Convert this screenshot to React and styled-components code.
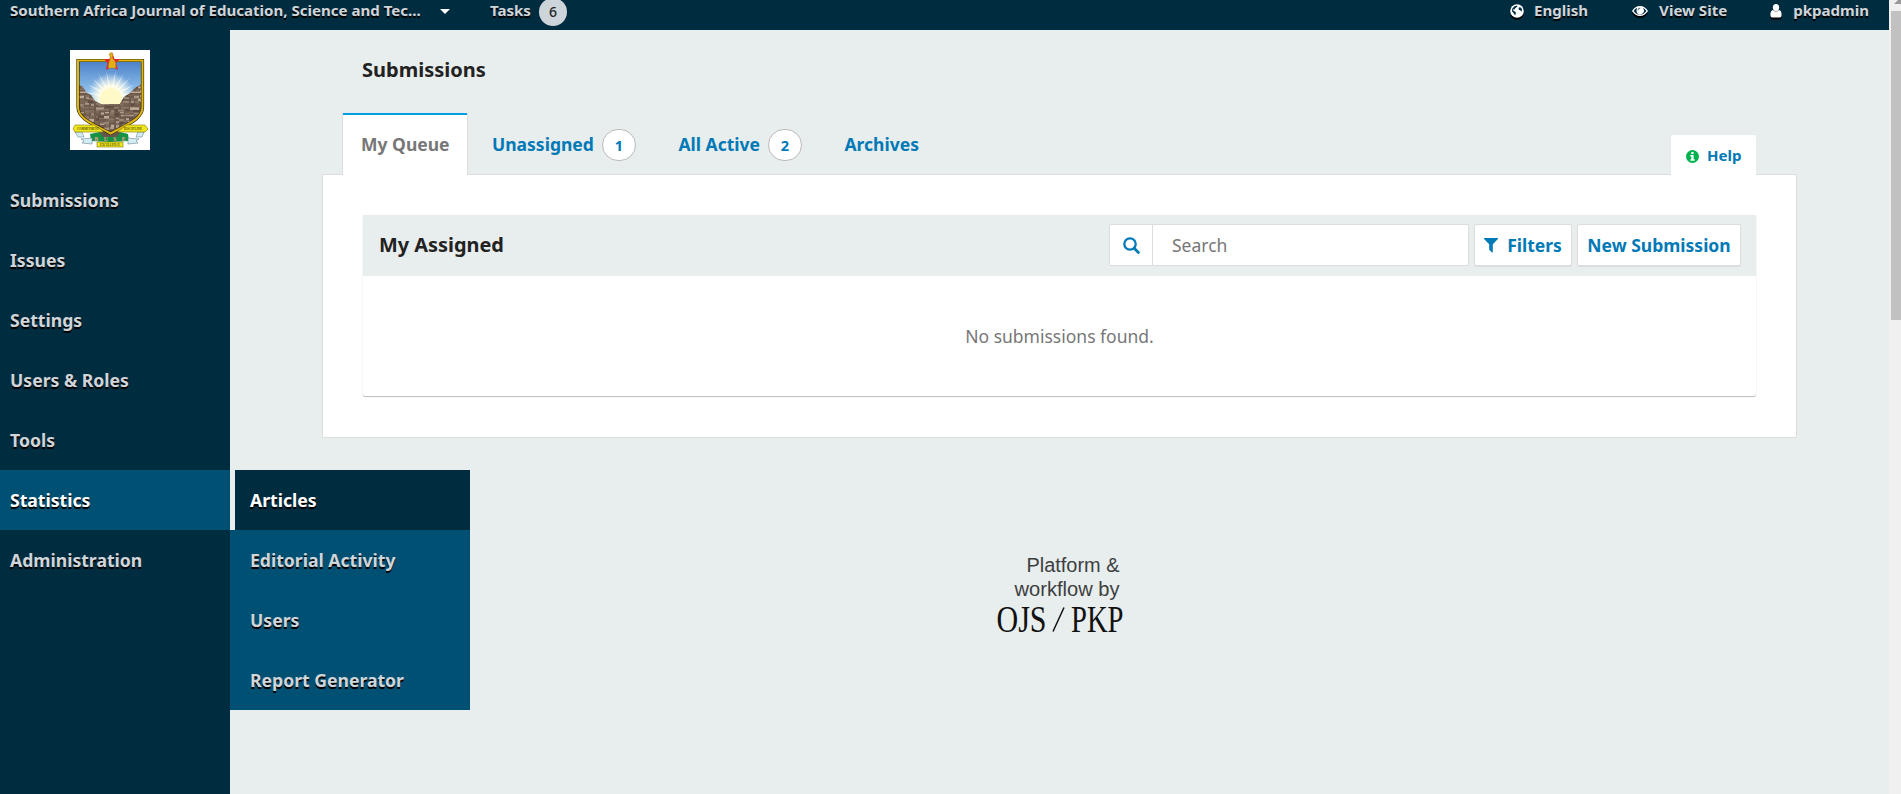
import React from "react";
import styled, { createGlobalStyle } from "styled-components";

const GlobalStyle = createGlobalStyle`
  * { box-sizing: border-box; }
  html, body, #root { height: 100%; }
  body {
    margin: 0;
    overflow: hidden;
    background: #e8eded;
    font-family: "Noto Sans", "Open Sans", sans-serif;
    font-size: 17.5px;
    color: #222;
  }
`;

const Window = styled.div`
  display: flex;
  height: 794px;
`;

const Page = styled.div`
  flex: 1;
  display: flex;
  flex-direction: column;
  min-width: 0;
`;

const TopBar = styled.header`
  display: flex;
  justify-content: space-between;
  height: 30px;
  padding: 0 20px 10px 10px;
  background: #002c40;
  color: #d0d5d9;
  font-size: 15.05px;
  font-weight: 700;
  line-height: 22px;
  text-shadow: 0 2px 0 #000;
  white-space: nowrap;
`;

const BarGroup = styled.div`
  display: flex;
  align-items: center;
`;

const JournalName = styled.div`
  width: 413px;
`;

const Caret = styled.span`
  flex: none;
  width: 10px;
  margin: 2px 40px 0 17px;
  border: 5px solid transparent;
  border-top-color: #fff;
  border-bottom: 0;
`;

const TaskCount = styled.span`
  flex: none;
  width: 28px;
  height: 28px;
  margin: 3px 0 0 8px;
  border-radius: 50%;
  background: #ced5da;
  color: #222;
  font-size: 14px;
  font-weight: 500;
  line-height: 28px;
  text-align: center;
  text-shadow: none;
`;

const UserLink = styled.a`
  display: flex;
  align-items: center;
  margin-left: ${(p) => p.$gap || 0}px;
  svg {
    flex: none;
    margin-top: 2px;
    margin-right: ${(p) => p.$iconGap}px;
    fill: #fff;
    filter: drop-shadow(0 2px 0 #000);
  }
`;

const Body = styled.div`
  flex: 1;
  display: flex;
  min-height: 0;
`;

const Sidebar = styled.aside`
  flex: none;
  width: 230px;
  background: #002c40;
`;

const LogoBox = styled.div`
  display: flex;
  height: 140px;
  padding: 20px 0 0 70px;
`;

const NavLink = styled.a`
  display: block;
  height: 60px;
  padding-left: ${(p) => p.$indent || 10}px;
  margin-left: ${(p) => p.$shift || 0}px;
  background: ${(p) => p.$bg || "transparent"};
  color: ${(p) => (p.$active ? "#fff" : "#d0d5d9")};
  font-size: 17.6px;
  font-weight: 700;
  line-height: 61px;
  text-shadow: 0 2px 0 #000;
  white-space: nowrap;
`;

const NavItem = styled.div`
  position: relative;
`;

const SubMenu = styled.div`
  position: absolute;
  left: 230px;
  top: 0;
  width: 240px;
  z-index: 2;
  background: linear-gradient(#e8eded 60px, #005073 60px);
`;

const Main = styled.main`
  flex: 1;
  padding: 0 92px;
`;

const Title = styled.h1`
  margin: 0;
  padding: 22px 0 0 40px;
  height: 83px;
  font-size: 20px;
  line-height: 36px;
`;

const TabRow = styled.div`
  display: flex;
  align-items: flex-end;
  height: 62px;
  padding: 0 41px 0 20px;
  margin-bottom: -1px;
  position: relative;
`;

const Tab = styled.button`
  position: relative;
  display: flex;
  align-items: center;
  height: 62px;
  width: ${(p) => p.$width}px;
  padding: 0 0 0 ${(p) => (p.$active ? 18 : 23)}px;
  border: solid ${(p) => (p.$active ? "#ddd" : "transparent")};
  border-width: 0 1px;
  background: ${(p) => (p.$active ? "#fff" : "transparent")};
  color: ${(p) => (p.$active ? "#777" : "#0079b7")};
  font: 700 17.5px "Noto Sans", sans-serif;
  white-space: nowrap;
  &::before {
    content: "";
    position: absolute;
    top: 0;
    left: 0;
    right: 0;
    height: 2px;
    background: ${(p) => (p.$active ? "#009de5" : "transparent")};
  }
`;

const Count = styled.span`
  width: 34px;
  height: 32px;
  margin: 1px 0 0 8px;
  border: 1px solid #bbb;
  border-radius: 16px;
  background: #fff;
  font-size: 14.5px;
  line-height: 31px;
  text-align: center;
`;

const HelpTab = styled.button`
  display: flex;
  align-items: center;
  gap: 8px;
  width: 85px;
  height: 40px;
  margin-left: auto;
  padding: 0 0 0 15px;
  border: 0;
  border-radius: 2px 2px 0 0;
  background: #fff;
  color: #0079b7;
  font: 700 15px/38px "Noto Sans", sans-serif;
  svg { flex: none; margin-top: 2px; }
`;

const Panel = styled.section`
  height: 264px;
  padding: 40px;
  border: 1px solid #ddd;
  border-radius: 2px;
  background: #fff;
`;

const Card = styled.div`
  height: 181px;
  border-radius: 2px;
  box-shadow: 0 1px 1px rgba(0, 0, 0, 0.25), 0 0 1px rgba(0, 0, 0, 0.12);
`;

const CardHeader = styled.div`
  display: flex;
  align-items: center;
  height: 61px;
  padding: 0 15px 1px 16px;
  background: #e8eded;
`;

const CardTitle = styled.h2`
  margin: 0 auto 0 0;
  padding-bottom: 2px;
  font-size: 19.9px;
`;

const SearchBox = styled.div`
  display: flex;
  width: 360px;
  height: 42px;
  margin-right: 5px;
  border: 1px solid #ddd;
  border-radius: 2px;
  background: #fff;
`;

const SearchIconBox = styled.div`
  display: flex;
  align-items: center;
  justify-content: center;
  width: 43px;
  border-right: 1px solid #ddd;
`;

const SearchInput = styled.input`
  flex: 1;
  min-width: 0;
  padding: 0 19px;
  border: 0;
  background: transparent;
  font: 17.5px "Noto Sans", sans-serif;
  &::placeholder { color: #777; opacity: 1; }
`;

const Button = styled.button`
  display: flex;
  align-items: center;
  justify-content: center;
  gap: 9px;
  width: ${(p) => p.$width}px;
  height: 42px;
  margin-left: ${(p) => p.$gap || 0}px;
  padding: 0;
  border: 1px solid #ddd;
  border-radius: 2px;
  box-shadow: 0 1px 0 #ddd;
  background: #fff;
  color: #0079b7;
  font: 700 17.5px "Noto Sans", sans-serif;
  white-space: nowrap;
`;

const EmptyNote = styled.p`
  margin: 0;
  line-height: 121px;
  text-align: center;
  color: #777;
`;

const Footer = styled.footer`
  display: flex;
  justify-content: center;
  padding-top: 112px;
`;

const ScrollTrack = styled.div`
  flex: none;
  width: 12px;
  padding-left: 2px;
  background: #f0f0f0;
`;

const ScrollArrow = styled.div`
  height: 11px;
  padding-left: 3px;
  svg { display: block; }
`;

const ScrollThumb = styled.div`
  height: 309px;
  background: #c1c1c1;
`;

const STONE = ["#9a8575", "#7b6658", "#bfaa98", "#8b7564", "#5e4c41", "#ae998a", "#846d5a"];

const stones = [];
for (let row = 0; row < 24; row += 1) {
  for (let col = 0; col < 15; col += 1) {
    const n = (row * 37 + col * 53 + row * col * 11) % 97;
    stones.push({
      x: 6 + col * 5 - (n % 4),
      y: 30 + row * 2.9 + (n % 3) * 0.6,
      w: 3 + (n % 4),
      h: 1.4 + (n % 3) * 0.6,
      c: STONE[n % STONE.length],
    });
  }
}

const SHIELD = "M8 10.5H72.5V57C72.5 69 58 74 40.5 83.5C23 74 8 69 8 57Z";

function Crest() {
  const rays = [-80, -62, -45, -28, -10, 10, 28, 45, 62, 80];
  return (
    <svg width="80" height="100" viewBox="0 0 80 100">
      <defs>
        <linearGradient id="sky" x1="0" y1="0" x2="0" y2="1">
          <stop offset="0" stopColor="#4a80c8" />
          <stop offset="0.5" stopColor="#9bcdf0" />
        </linearGradient>
        <radialGradient id="sun">
          <stop offset="0" stopColor="#fff59c" />
          <stop offset="0.45" stopColor="#fffde0" />
          <stop offset="1" stopColor="#fff" stopOpacity="0" />
        </radialGradient>
        <clipPath id="shield"><path d={SHIELD} /></clipPath>
        <clipPath id="rock">
          <path d="M6 35L12 36L17 43L21 45L25 51L31 54H50L54 47L60 43L65 38L74 33V90H6Z" />
        </clipPath>
      </defs>
      <rect width="80" height="100" fill="#fff" />
      <g clipPath="url(#shield)">
        <path d={SHIELD} fill="url(#sky)" />
        <circle cx="41" cy="47" r="24" fill="url(#sun)" />
        {rays.map((a) => (
          <path key={a} d="M39.7 47L41 20L42.3 47Z" fill="#fff" opacity="0.75" transform={`rotate(${a} 41 47)`} />
        ))}
        <circle cx="41" cy="49" r="11" fill="#fff9c8" />
        <g clipPath="url(#rock)">
          <rect x="5" y="30" width="70" height="60" fill="#6e5b4e" />
          {stones.map((s, i) => (
            <rect key={i} x={s.x} y={s.y} width={s.w} height={s.h} fill={s.c} />
          ))}
        </g>
      </g>
      <path d="M20 84L34 81L40 85L46 81L58 84L59 91L40 92L21 91Z" fill="#149344" />
      <path d="M28 80L52 80L47 87H33Z" fill="#66574d" />
      <path d={SHIELD} fill="none" stroke="#2d2912" strokeWidth="3.2" />
      <path d={SHIELD} fill="none" stroke="#e0b80d" strokeWidth="2" />
      <path d="M5 82L12 82L14 87L8 87ZM74 82L68 82L66 87L72 87ZM11 89L22 88V94L12 93L14 91ZM69 89L58 88V94L68 93L66 91Z" fill="#d4edf5" stroke="#6c8590" strokeWidth="0.6" />
      <path d="M5 75H24L33 81V82H5L3 79ZM75 75H57L48 81V82H75L78 79Z" fill="#f1e51d" stroke="#817816" strokeWidth="0.6" />
      <rect x="27" y="92" width="26" height="5" fill="#f1e51d" stroke="#817816" strokeWidth="0.6" />
      <g fontFamily="Liberation Serif, serif" fontWeight="700" textAnchor="middle">
        <text x="18" y="80.3" fontSize="4" textLength="22" lengthAdjust="spacingAndGlyphs" fill="#5d580d">COMMITMENT</text>
        <text x="63" y="80.3" fontSize="4" textLength="18" lengthAdjust="spacingAndGlyphs" fill="#5d580d">DISCIPLINE</text>
        <text x="40" y="96" fontSize="4" textLength="20" lengthAdjust="spacingAndGlyphs" fill="#5d580d">EXCELLENCE</text>
        <text x="40" y="90.5" fontSize="5.5" textLength="31" fill="#f0a090">BUSE</text>
      </g>
      <path d="M42 2L44.5 9H50L46 13L48 20L42 17L36 20L37.5 13L34 9H39.5Z" fill="#e3242b" />
      <path d="M39 4L41 2.5L43 4L42.5 8L45.5 12L46 18H38L39 12L40.5 8Z" fill="#e2ae18" stroke="#9c7512" strokeWidth="0.4" />
    </svg>
  );
}

function PlatformLogo() {
  return (
    <svg width="130" height="90" viewBox="994.5 550 130 90">
      <g fontFamily="Liberation Sans, Arial, sans-serif" fontSize="20" fill="#3c3f40">
        <text x="1026" y="572.3" textLength="93" lengthAdjust="spacingAndGlyphs">Platform &amp;</text>
        <text x="1014" y="596" textLength="105" lengthAdjust="spacingAndGlyphs">workflow by</text>
      </g>
      <g fontFamily="Liberation Serif, serif" fontSize="37" fill="#111">
        <text x="996" y="631.5" textLength="50" lengthAdjust="spacingAndGlyphs">OJS</text>
        <path d="M1052.5 631.5L1063.5 607.5" stroke="#111" strokeWidth="1.5" />
        <text x="1070.5" y="631.5" textLength="52.5" lengthAdjust="spacingAndGlyphs">PKP</text>
      </g>
    </svg>
  );
}

const GlobeIcon = () => (
  <svg width="14" height="14" viewBox="0 0 14 14">
    <circle cx="7" cy="7" r="6.8" />
    <path d="M4.5 2.2L7.5 1.4L7 3L5.2 4L4.8 5.5L3 5.2L3.2 6.5L5.5 8L6 9L5 11.6L3.9 9.6L2 7.3L2.2 4.8ZM8.6 4L10 3L12 5L11.6 7.8L10.5 6.4L8.8 5.8Z" fill="#002c40" />
  </svg>
);

const EyeIcon = () => (
  <svg width="16" height="12" viewBox="0 0 16 12">
    <path d="M0 6Q3.2 1 8 1T16 6Q12.8 11 8 11T0 6Z" />
    <path d="M1.6 6Q3 3.8 5.2 2.8Q3.6 6.2 5.5 8.4T10.5 8.4T10.8 2.8Q13 3.8 14.4 6Q12 9.7 8 9.7T1.6 6Z" fill="#002c40" />
    <path d="M5.9 5.2Q6.3 3.1 8.3 3" fill="none" stroke="#002c40" strokeWidth="0.8" />
  </svg>
);

const PersonIcon = () => (
  <svg width="12" height="14" viewBox="0 0 12 14">
    <ellipse cx="6" cy="3.6" rx="3.2" ry="3.6" />
    <path d="M3 6Q6 9 9 6Q11.6 6.5 11.6 11Q11.6 13.5 9.6 13.5H2.4Q.4 13.5 .4 11Q.4 6.5 3 6Z" />
  </svg>
);

const InfoIcon = () => (
  <svg width="13" height="13" viewBox="0 0 13 13">
    <circle cx="6.5" cy="6.5" r="6.5" fill="#00b24e" />
    <path d="M5.3 2H7.6V3.9H5.3ZM4.3 5H7.6V9.2H8.7V10.8H4.3V9.2H5.3V6.4H4.3Z" fill="#fff" />
  </svg>
);

const SearchIcon = () => (
  <svg width="17" height="17" viewBox="0 0 17 17" fill="none" stroke="#0079b7">
    <circle cx="7" cy="7" r="5.7" strokeWidth="2.3" />
    <path d="M11.2 11.2L15.4 15.4" strokeWidth="2.8" strokeLinecap="round" />
  </svg>
);

const FunnelIcon = () => (
  <svg width="14" height="15" viewBox="0 0 14 15">
    <path d="M.3 0H13.7Q14.2.7 13.7 1.2L8.8 6.2V14.2Q8.6 14.8 8 14.5L5.2 11.8V6.2L.3 1.2Q-.2.7.3 0Z" fill="#0079b7" />
  </svg>
);

const navItems = ["Submissions", "Issues", "Settings", "Users & Roles", "Tools"];
const subItems = ["Editorial Activity", "Users", "Report Generator"];

export default function App() {
  return (
    <Window>
      <GlobalStyle />
      <Page>
        <TopBar>
          <BarGroup>
            <JournalName>Southern Africa Journal of Education, Science and Tec...</JournalName>
            <Caret />
            Tasks
            <TaskCount>6</TaskCount>
          </BarGroup>
          <BarGroup>
            <UserLink $iconGap={10}><GlobeIcon />English</UserLink>
            <UserLink $gap={44} $iconGap={11}><EyeIcon />View Site</UserLink>
            <UserLink $gap={43} $iconGap={11}><PersonIcon />pkpadmin</UserLink>
          </BarGroup>
        </TopBar>
        <Body>
          <Sidebar>
            <LogoBox><Crest /></LogoBox>
            <nav>
              {navItems.map((label) => <NavLink key={label}>{label}</NavLink>)}
              <NavItem>
                <NavLink $active $bg="#005073">Statistics</NavLink>
                <SubMenu>
                  <NavLink $active $bg="#002c40" $shift={5} $indent={15}>Articles</NavLink>
                  {subItems.map((label) => <NavLink key={label} $indent={20}>{label}</NavLink>)}
                </SubMenu>
              </NavItem>
              <NavLink>Administration</NavLink>
            </nav>
          </Sidebar>
          <Main>
            <Title>Submissions</Title>
            <TabRow>
              <Tab $active $width={126}>My Queue</Tab>
              <Tab $width={186.5}>Unassigned<Count>1</Count></Tab>
              <Tab $width={166}>All Active<Count>2</Count></Tab>
              <Tab $width={124}>Archives</Tab>
              <HelpTab><InfoIcon />Help</HelpTab>
            </TabRow>
            <Panel>
              <Card>
                <CardHeader>
                  <CardTitle>My Assigned</CardTitle>
                  <SearchBox>
                    <SearchIconBox><SearchIcon /></SearchIconBox>
                    <SearchInput placeholder="Search" />
                  </SearchBox>
                  <Button $width={98}><FunnelIcon />Filters</Button>
                  <Button $width={164} $gap={5}>New Submission</Button>
                </CardHeader>
                <EmptyNote>No submissions found.</EmptyNote>
              </Card>
            </Panel>
            <Footer><PlatformLogo /></Footer>
          </Main>
        </Body>
      </Page>
      <ScrollTrack>
        <ScrollArrow>
          <svg width="8" height="4" viewBox="0 0 8 4"><path d="M0 4L4 0H8V4Z" fill="#999" /></svg>
        </ScrollArrow>
        <ScrollThumb />
      </ScrollTrack>
    </Window>
  );
}
